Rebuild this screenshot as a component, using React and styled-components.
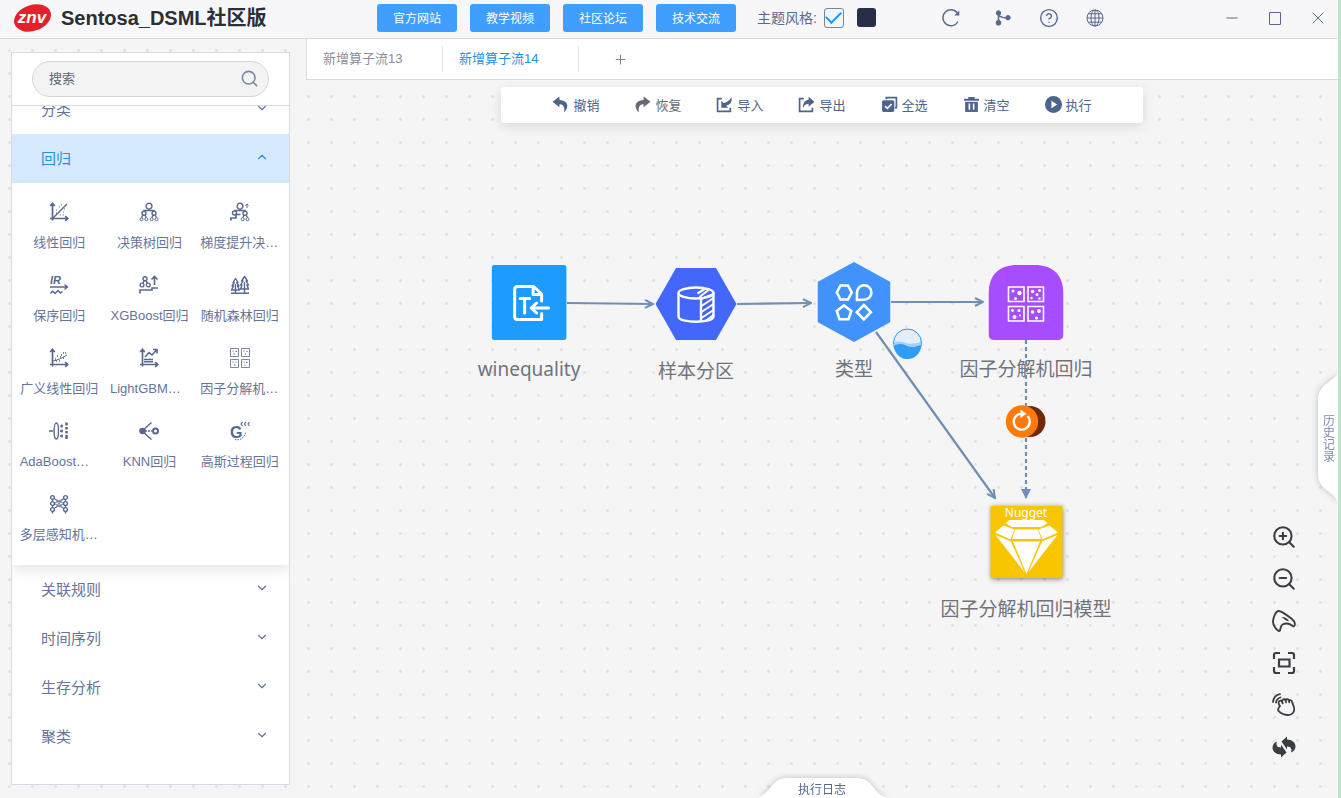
import { useLayoutEffect, useRef } from "react";
import styled, { createGlobalStyle } from "styled-components";
import { ChevronDown, ChevronUp, CircleHelp, Minus, Plus, Search, X, ZoomIn, ZoomOut } from "lucide-react";

const links = ["官方网站", "教学视频", "社区论坛", "技术交流"];
const tabs = ["新增算子流13", "新增算子流14"];

const algorithms = [
  { name: "线性回归", icon: <LinearIcon /> },
  { name: "决策树回归", icon: <TreeIcon /> },
  { name: "梯度提升决策树回归", icon: <BoostTreeIcon /> },
  { name: "保序回归", icon: <IsotonicIcon /> },
  { name: "XGBoost回归", icon: <XgbIcon /> },
  { name: "随机森林回归", icon: <ForestIcon /> },
  { name: "广义线性回归", icon: <GlmIcon /> },
  { name: "LightGBM回归", icon: <LightGbmIcon /> },
  { name: "因子分解机回归", icon: <FactorIcon /> },
  { name: "AdaBoost回归", icon: <AdaBoostIcon /> },
  { name: "KNN回归", icon: <KnnIcon /> },
  { name: "高斯过程回归", icon: <GaussIcon /> },
  { name: "多层感知机回归", icon: <MlpIcon /> },
];

const actions = [
  { name: "撤销", icon: <UndoIcon /> },
  { name: "恢复", icon: <RedoIcon />, muted: true },
  { name: "导入", icon: <ImportIcon /> },
  { name: "导出", icon: <ExportIcon /> },
  { name: "全选", icon: <SelectAllIcon /> },
  { name: "清空", icon: <TrashIcon /> },
  { name: "执行", icon: <RunIcon /> },
];

// x and y are the centre of the shape on the canvas
const nodes = [
  { name: "winequality", x: 223, y: 222, shape: <SourceShape /> },
  { name: "样本分区", x: 390, y: 224, shape: <PartitionShape /> },
  { name: "类型", x: 548, y: 222, shape: <TypeShape /> },
  { name: "因子分解机回归", x: 720, y: 222, shape: <FactorShape /> },
  { name: "因子分解机回归模型", x: 720, y: 462, shape: <NuggetShape /> },
];

function App() {
  return (
    <Page>
      <GlobalStyle />
      <Header />
      <Body>
        <Sidebar />
        <Workspace>
          <TabBar>
            {tabs.map((tab, i) => (
              <Tab key={tab} $active={i === 1}>{tab}</Tab>
            ))}
            <AddTab aria-label="新增"><Plus size={15} strokeWidth={1.7} /></AddTab>
          </TabBar>
          <Canvas>
            <Toolbar>
              {actions.map((a) => (
                <Action key={a.name} $muted={a.muted}>{a.icon}{a.name}</Action>
              ))}
            </Toolbar>
            {nodes.map((n) => (
              <Node key={n.name} $x={n.x} $y={n.y}>
                <Shape>{n.shape}</Shape>
                <NodeLabel>{n.name}</NodeLabel>
              </Node>
            ))}
            <Edges />
            <CanvasTools />
            <HistoryTab><HistoryButton>历史记录</HistoryButton></HistoryTab>
            <LogTab><LogButton>执行日志</LogButton></LogTab>
          </Canvas>
        </Workspace>
      </Body>
    </Page>
  );
}

function Header() {
  return (
    <HeaderBar>
      <Brand>
        <svg width="39" height="30" viewBox="0 0 39 30">
          <ellipse cx="19.5" cy="15" rx="19" ry="13" fill="#e5202b" transform="rotate(-18 19.5 15)" />
          <LogoText x="19" y="20" textAnchor="middle">znv</LogoText>
        </svg>
        <Title>Sentosa_DSML社区版</Title>
      </Brand>
      <LinkList>
        {links.map((l) => <LinkButton key={l}>{l}</LinkButton>)}
      </LinkList>
      <Theme>
        <ThemeLabel htmlFor="light">主题风格:</ThemeLabel>
        <Check id="light" type="checkbox" defaultChecked />
        <Swatch aria-label="深色" />
      </Theme>
      <Refresh>
        <IconButton aria-label="刷新">
          <svg width="20" height="20" viewBox="0 0 20 20" fill="none" stroke="currentColor" strokeWidth="1.4">
            <path d="M17 13.5A8 8 0 1 1 16.5 5.2" />
            <path d="M18.3 2.5v5h-5z" fill="currentColor" stroke="none" />
          </svg>
        </IconButton>
      </Refresh>
      <IconList>
        <IconButton aria-label="分支">
          <svg width="20" height="20" viewBox="0 0 20 20" fill="currentColor" stroke="currentColor">
            <path d="M5.5 5v10M5.5 6.5C7 9.5 11 10 15 9.7" fill="none" strokeWidth="1.6" />
            <circle cx="5.5" cy="5" r="2.2" />
            <circle cx="5.5" cy="14.8" r="2.4" />
            <circle cx="15" cy="9.7" r="2.2" />
          </svg>
        </IconButton>
        <IconButton aria-label="帮助"><CircleHelp size={20} strokeWidth={1.7} /></IconButton>
        <IconButton aria-label="语言">
          <svg width="20" height="20" viewBox="0 0 20 20" fill="none" stroke="currentColor">
            <circle cx="10" cy="10" r="8" />
            <ellipse cx="10" cy="10" rx="4" ry="8" />
            <path d="M10 2v16M2 10h16M3.3 5.8h13.4M3.3 14.2h13.4" />
          </svg>
        </IconButton>
      </IconList>
      <WindowList>
        <IconButton aria-label="最小化"><Minus size={18} strokeWidth={1.4} /></IconButton>
        <IconButton aria-label="最大化">
          <svg width="18" height="18" viewBox="0 0 18 18" fill="none" stroke="currentColor">
            <path d="M3.5 3.5h11v12h-11z" />
          </svg>
        </IconButton>
        <IconButton aria-label="关闭"><X size={20} strokeWidth={1.2} /></IconButton>
      </WindowList>
    </HeaderBar>
  );
}

function Sidebar() {
  const list = useRef(null);
  useLayoutEffect(() => {
    list.current.scrollTop = 21;
  }, []);

  return (
    <Aside>
      <SearchArea>
        <SearchBox>
          <SearchInput aria-label="搜索" placeholder="搜索" />
          <Search size={19} strokeWidth={2} />
        </SearchBox>
      </SearchArea>
      <List ref={list}>
        <Group>分类<ChevronDown size={14} strokeWidth={2} /></Group>
        <Group $open>回归<ChevronUp size={14} strokeWidth={2} /></Group>
        <Grid>
          {algorithms.map((a) => (
            <Cell key={a.name} title={a.name}>
              {a.icon}
              <CellName>{a.name}</CellName>
            </Cell>
          ))}
        </Grid>
        {["关联规则", "时间序列", "生存分析", "聚类"].map((g) => (
          <Group key={g}>{g}<ChevronDown size={14} strokeWidth={2} /></Group>
        ))}
      </List>
    </Aside>
  );
}

function Edges() {
  return (
    <EdgeLayer>
      <defs>
        <marker id="open" viewBox="0 0 10 10" refX="9" refY="5" markerWidth="10" markerHeight="10" markerUnits="userSpaceOnUse" orient="auto">
          <path d="M1 1l8 4-8 4" fill="none" stroke="#6f8fb5" strokeWidth="2" />
        </marker>
        <marker id="solid" viewBox="0 0 10 10" refX="9" refY="5" markerWidth="10" markerHeight="10" markerUnits="userSpaceOnUse" orient="auto">
          <path d="M0 0l10 5-10 5z" fill="#6f8fb5" />
        </marker>
      </defs>
      <g stroke="#6f8fb5" strokeWidth="2.2" fill="none">
        <path d="M261 223l86 1" markerEnd="url(#open)" />
        <path d="M431 224l74-1" markerEnd="url(#open)" />
        <path d="M585 222h92" markerEnd="url(#open)" />
        <path d="M570 252l119 166" markerEnd="url(#open)" />
        <path d="M720 260v158" strokeDasharray="4 3" markerEnd="url(#solid)" />
      </g>
      <g>
        <circle cx="601.5" cy="263" r="14" fill="#e3eef8" stroke="#2196f3" />
        <path d="M588 263c4-3 8-1 12 0s9 1 15-1v3l-3 4h-22z" fill="#a3cff5" />
        <path d="M588 266c5-3 9-2 13 0s9 1 14-1a13.5 13.5 0 0 1-27 1z" fill="#2f9df7" />
      </g>
      <g>
        <circle cx="724" cy="341.5" r="15.5" fill="#6e2a0b" />
        <circle cx="716" cy="341.5" r="16.2" fill="#ff7a08" />
        <path d="M721.5 336a8 8 0 1 1-6-2.4" fill="none" stroke="#fff" strokeWidth="2.4" />
        <path d="M714.5 329.5l6 4.2-6 4.2z" fill="#fff" />
      </g>
    </EdgeLayer>
  );
}

function CanvasTools() {
  return (
    <ToolList>
      <ToolButton aria-label="放大"><ZoomIn size={26} strokeWidth={1.9} /></ToolButton>
      <ToolButton aria-label="缩小"><ZoomOut size={26} strokeWidth={1.9} /></ToolButton>
      <ToolButton aria-label="画笔">
        <svg width="24" height="24" viewBox="0 0 24 24" fill="none" stroke="currentColor" strokeWidth="1.9" strokeLinejoin="round">
          <path d="M6.5 2C4 2 1.2 8 1 12.500c-.2 4 3.800 9 6 9.500 2.200.2.500-5 3.500-6.500 3-1.500 7-1 9.500 1 1.500 1.500 2.200.8 2.700-.500.800-2.500-.7-4.300-2.700-6C15.500 6.500 9 1.500 6.500 2z" />
          <path d="M9.500 8l4.500 3.500 3 .7c-1-2.500-3.500-4.200-7.500-4.200z" fill="currentColor" stroke="none" />
        </svg>
      </ToolButton>
      <ToolButton aria-label="适应画布">
        <svg width="24" height="24" viewBox="0 0 24 24" fill="none" stroke="currentColor" strokeWidth="2.2">
          <path d="M2 8V4q0-2 2-2h4M16 2h4q2 0 2 2v4M22 16v4q0 2-2 2h-4M8 22H4q-2 0-2-2v-4M7 8.500h10.500v7H7z" />
        </svg>
      </ToolButton>
      <ToolButton aria-label="拖动">
        <svg width="24" height="24" viewBox="0 0 24 24" fill="none" stroke="currentColor" strokeWidth="1.8" strokeLinecap="round" strokeLinejoin="round">
          <path d="M1 9C1.500 4.500 4 2 8 1.200M4 9.500C4.500 6.700 6.500 5 8.500 4.500" />
          <path d="M8 13c-1.500-1.800-2-4-.5-5 .8-.6 2-.4 2.500.4C10 6.500 12.500 5.600 13.500 7c.8-1.200 3-1 3.500.5 1-.8 2.700-.2 3 1.200.8 2.800 2.700 5.300 2.200 8.300-.6 3.300-3.400 5.400-6.700 5-3.500-.4-6.500-1.500-9-4.200-1.500-1.800.5-3.300 1.500-4.800z" />
          <path d="M10 8.400l.7 2M13.500 7l.5 2.300M17 7.500l.3 1.800" />
        </svg>
      </ToolButton>
      <ToolButton aria-label="刷新画布">
        <svg width="24" height="24" viewBox="0 0 24 24" fill="currentColor">
          <path id="turn" d="M9.500 6.500L15 1.500v3c5 0 8.500 3 8.500 7 0 2.500-1.500 5-4.500 6 1.200-3 .2-6-4-6v3z" />
          <use href="#turn" transform="rotate(180 12 12)" />
        </svg>
      </ToolButton>
    </ToolList>
  );
}

/* algorithm icons */

function AlgoSvg({ children }) {
  return (
    <svg width="20" height="20" viewBox="0 0 20 20" fill="none" stroke="currentColor" strokeWidth="1.4">
      {children}
    </svg>
  );
}

function Axes() {
  return <path strokeWidth="1.7" d="M3.5 1.5v17M1 16.5h17.5M1.2 4l2.300-2.600L5.800 4M16.200 14.200l2.500 2.300-2.500 2.300" />;
}

function LinearIcon() {
  return (
    <AlgoSvg>
      <Axes />
      <path d="M4 16L18 2" strokeWidth="1.5" />
      <path d="M7 8h1M10 5h1M7 11h1M12 3h1M11 13h1M14 10h1M15 7h1M14 13h1" strokeWidth="1" />
    </AlgoSvg>
  );
}

function TreeIcon() {
  return (
    <AlgoSvg>
      <circle cx="10" cy="4.2" r="2.9" />
      <circle cx="5" cy="11.3" r="2" />
      <circle cx="15" cy="11.3" r="2" />
      <path d="M10 7v1.500M5 9.300V8.500h10v.8M4 13l-1.500 2.500M6 13l1 2.500M14 13l-1 2.500M16 13l1.500 2.500" />
      <g strokeWidth="1">
        <circle cx="2.5" cy="17.2" r="1.5" />
        <circle cx="7.3" cy="17.2" r="1.5" />
        <circle cx="12.7" cy="17.2" r="1.5" />
        <circle cx="17.5" cy="17.2" r="1.5" />
      </g>
    </AlgoSvg>
  );
}

function BoostTreeIcon() {
  return (
    <AlgoSvg>
      <circle cx="10" cy="4.2" r="2.9" />
      <circle cx="4.5" cy="11" r="2" />
      <circle cx="15" cy="11.3" r="2" />
      <path d="M10 7v1.500M5 9V8.500h10v.8M14 13l-1 2.500M16 13l1.500 2.500" />
      <path d="M1 18.500V16h5v-3.500h4.500" strokeWidth="1.7" />
      <path d="M17 6V2M15.500 3.500L17 2l1.500 1.500" strokeWidth="1" />
      <circle cx="12.7" cy="17.2" r="1.5" strokeWidth="1" />
      <circle cx="17.5" cy="17.2" r="1.5" strokeWidth="1" />
    </AlgoSvg>
  );
}

function IsotonicIcon() {
  return (
    <AlgoSvg>
      <path d="M1 12h17M15.500 9.500l3 2.500-3 2.500M1.500 18.500l2-2.500 2.500 2.500L9 15.500l2.500 2.500 2-1.500" />
      <GlyphText x="1" y="9">IR</GlyphText>
    </AlgoSvg>
  );
}

function XgbIcon() {
  return (
    <AlgoSvg>
      <circle cx="6" cy="3.8" r="2" />
      <circle cx="3" cy="10" r="1.9" />
      <circle cx="9.3" cy="10" r="1.9" />
      <path d="M5.300 6L3.800 8M7 6l1.500 2" />
      <path d="M15.500 10V2M12.500 4.500l3-3 3 3M1 18.500V15h12v-2h6" strokeWidth="1.6" />
    </AlgoSvg>
  );
}

function ForestIcon() {
  return (
    <AlgoSvg>
      <path d="M1 18.300h18M5.500 9v9M14.500 7v11M5.500 3.500L3 7.500h1.300L2 11h1.500L1.500 15h8L7.500 11H9L6.700 7.500H8zM14.500 1.500l-3 4.500h1.500l-2.500 4H12l-1.500 4h8L17 10h1.500L16 6h1.500z" strokeLinejoin="round" />
    </AlgoSvg>
  );
}

function GlmIcon() {
  return (
    <AlgoSvg>
      <Axes />
      <path d="M4 13c4-.5 8-2.500 14-6" strokeWidth="1" />
      <path d="M6 11h1M8 8h1M11 9h1M10 13h1M14 5h1M16 5h1M14 10h1M12 7h1M7 13h1" />
    </AlgoSvg>
  );
}

function LightGbmIcon() {
  return (
    <AlgoSvg>
      <Axes />
      <path d="M6 9l4-4.500 3 2.500 5-5.500M14 1.500h4v4" strokeWidth="1.6" />
      <path d="M5 11.500h9M5 13.800h9" />
    </AlgoSvg>
  );
}

function FactorIcon() {
  return (
    <AlgoSvg>
      <path d="M.5.5h8v8h-8zM11.500.5h8v8h-8zM.5 11.500h8v8h-8zM11.500 11.500h8v8h-8z" strokeWidth=".8" />
      <path d="M2.500 3h1M5.500 3.500h1.500M3.500 6h1.500M13.500 3h1M16.500 3.500h1M15 6h1M2.500 14h1M5.500 14h1M4 17h1.500M13.500 14h1M16 14.500h1.500M14.500 17h1" strokeWidth="1.2" />
    </AlgoSvg>
  );
}

function AdaBoostIcon() {
  return (
    <AlgoSvg>
      <ellipse cx="7.3" cy="10" rx="2.2" ry="8" />
      <path d="M0 10h4M11 5h3M11 10h3M11 15h3M12.800 3.500v3M12.800 8.500v3M12.800 13.500v3" />
      <path d="M17.500 1.500v3M17.500 6v2.500M17.500 10v2.500M17.500 14v4" strokeWidth="2.500" />
    </AlgoSvg>
  );
}

function KnnIcon() {
  return (
    <AlgoSvg>
      <circle cx="3.5" cy="10" r="2.6" fill="currentColor" />
      <circle cx="16.5" cy="10" r="2.5" strokeWidth="2" />
      <path d="M3 10l9.500-8.500M3 10l9.500 8.500" strokeWidth="1.5" />
      <path d="M6 10h7" strokeDasharray="2 1" />
    </AlgoSvg>
  );
}

function GaussIcon() {
  return (
    <AlgoSvg>
      <GlyphText x="0" y="17" $big>G</GlyphText>
      <path d="M12.500 1l-1.500 2 1.500 2M16 1l-1.500 2L16 5M19.500 1L18 3l1.500 2" strokeWidth="1.2" />
      <path d="M5 18.500c5 1 9-1 10.500-7" strokeWidth="1" strokeDasharray="1.5 1" />
    </AlgoSvg>
  );
}

function MlpIcon() {
  return (
    <AlgoSvg>
      {[3.5, 9.5, 15.5].map((y) => (
        <g key={y}>
          <circle cx="3.5" cy={y} r="1.9" />
          <circle cx="16.5" cy={y} r="1.9" />
        </g>
      ))}
      <path d="M5 4l10 11M5 15L15 4M5 9.500l10-5M5 9.500l10 5M5 4.500l10 5M5 14.500l10-5" strokeWidth=".9" />
      <path d="M3.500 5.500v2M3.500 11.500v2M16.500 5.500v2M16.500 11.500v2M3.500 17.500v2M16.500 17.500v2" />
    </AlgoSvg>
  );
}

/* toolbar icons */

function ActionSvg({ children }) {
  return <svg width="17" height="17" viewBox="0 0 16 16" fill="currentColor">{children}</svg>;
}

function UndoIcon() {
  return <ActionSvg><path d="M7 .5L.500 5.500l6.500 5V7.700c3.500 0 5 2 4.500 7.500 4.500-4 4.500-11-4.500-11.500z" /></ActionSvg>;
}

function RedoIcon() {
  return <ActionSvg><path d="M9 .5l6.500 5-6.500 5V7.700c-3.500 0-5 2-4.500 7.500C0 11.200 0 4.200 9 3.700z" /></ActionSvg>;
}

function ImportIcon() {
  return (
    <ActionSvg>
      <path d="M5.500 2.500h-4v12h12V11" fill="none" stroke="currentColor" strokeWidth="1.6" />
      <path d="M5 11V4.500l2.200 2.200C9.500 6.500 12 5 14.500 1.500 15.500 6 13 8.700 9.500 9l2 2z" />
    </ActionSvg>
  );
}

function ExportIcon() {
  return (
    <ActionSvg>
      <path d="M5.500 2.500h-4v12h12V11" fill="none" stroke="currentColor" strokeWidth="1.6" />
      <path d="M10 .8l5.500 4.700-5.500 4.500V7.300C7.500 7.300 6 8.500 4.800 11.200 4.500 6.500 6.500 3.800 10 3.500z" />
    </ActionSvg>
  );
}

function SelectAllIcon() {
  return (
    <ActionSvg>
      <path d="M5 3V1.500h9.500V11H13" fill="none" stroke="currentColor" strokeWidth="1.6" />
      <path d="M2.500 4h8.500q1.500 0 1.500 1.500v8q0 1.500-1.500 1.500H2.500Q1 15 1 13.500v-8Q1 4 2.500 4z" />
      <path d="M3.800 9.500l2.200 2.200 4-4.200" fill="none" stroke="#fff" strokeWidth="1.5" />
    </ActionSvg>
  );
}

function TrashIcon() {
  return (
    <ActionSvg>
      <path d="M1 2.500h4V1h6v1.500h4v2H1z" />
      <path d="M2 5.500h12V15H2z" />
      <path d="M6 7v6M10 7v6" stroke="#fff" strokeWidth="1.5" />
    </ActionSvg>
  );
}

function RunIcon() {
  return (
    <ActionSvg>
      <circle cx="8" cy="8" r="8" />
      <path d="M6 4.500L11.500 8 6 11.500z" fill="#fff" />
    </ActionSvg>
  );
}

/* node shapes */

function SourceShape() {
  return (
    <svg width="75" height="75" viewBox="0 0 75 75" fill="none" stroke="#fff" strokeWidth="3" strokeLinecap="round" strokeLinejoin="round">
      <rect width="75" height="75" rx="3" fill="#1e9bff" stroke="none" />
      <path d="M50 36V29l-8-7.500H26q-3 0-3 3v27q0 3 3 3h24v-6M41.500 22v7.500H50" />
      <path d="M28.500 33.500h9.500M33 33.500V48M40 43h17M45 38l-5.500 5 5.500 5" />
    </svg>
  );
}

function PartitionShape() {
  return (
    <svg width="81" height="72" viewBox="0 0 81 72" fill="none" stroke="#fff" strokeWidth="2.4" strokeLinejoin="round">
      <path d="M0 36L20.500 0h40L81 36 60.500 72h-40z" fill="#4366fb" stroke="none" />
      <ellipse cx="40.5" cy="25" rx="17.5" ry="5.5" />
      <path d="M23 25v23.500c0 7 35 7 35 0V25M45.500 31v22.500M45.500 31L58 26M42 25.500l8-5" />
      <path d="M46 38l12-8M46 44l12-8M46 50l12-8M50 53l8-6M44 29l9-7" strokeWidth="2" />
    </svg>
  );
}

function TypeShape() {
  return (
    <svg width="73" height="80" viewBox="0 0 73 80" fill="none" stroke="#fff" strokeWidth="2.6">
      <path d="M36.500 0L73 20v40L36.500 80 0 60V20z" fill="#4192fd" stroke="none" />
      <path d="M23 23.500h7.500l3.700 7-3.700 7H23l-3.700-7z" />
      <path d="M39.500 38v-7.500a7.200 7.200 0 1 1 7.200 7.200z" />
      <path d="M26.500 43.500l7.300 5.500-2.800 8.300h-9L19.300 49z" />
      <path d="M46.300 43l7 7.200-7 7.200-7-7.200z" />
    </svg>
  );
}

function FactorShape() {
  return (
    <svg width="75" height="75" viewBox="0 0 75 75" fill="none" stroke="#fff" strokeWidth="1.6">
      <path d="M0 30C0 9 11 0 29 0h17c18 0 29 9 29 30v39q0 6-6 6H6q-6 0-6-6z" fill="#a64dff" stroke="none" />
      <path d="M20 22h15.500v14.500H20zM39.500 22H55v14.500H39.500zM20 41.500h15.500V56H20zM39.500 41.500H55V56H39.500z" />
      <g fill="#fff" stroke="none">
        <circle cx="24.5" cy="26" r="1.5" /><circle cx="31" cy="28" r="2.2" /><circle cx="27" cy="33.5" r="1.5" />
        <circle cx="44" cy="26.5" r="1.8" /><circle cx="51" cy="25.5" r="1.4" /><circle cx="48.5" cy="29.5" r="1.5" />
        <circle cx="43" cy="33" r="1.2" /><circle cx="51" cy="33.5" r="1.2" />
        <circle cx="24" cy="45.5" r="1.4" /><circle cx="30.5" cy="45.5" r="1.6" /><circle cx="26" cy="52" r="2" />
        <circle cx="31.5" cy="50.5" r="1" />
        <circle cx="44" cy="47" r="1.8" /><circle cx="50.5" cy="46" r="1.9" /><circle cx="48" cy="53" r="1.6" />
      </g>
    </svg>
  );
}

function NuggetShape() {
  return (
    <Nugget>
      <NuggetName>Nugget</NuggetName>
      <svg width="64" height="55" viewBox="4 15 64 55" fill="#fff">
        <path d="M15 18l4-3h34l4 3-6 4H21z" />
        <path d="M4.500 27.500L13 20.500l11 4-4 10z" />
        <path d="M67.500 27.500L59 20.500l-11 4 4 10z" />
        <path d="M24.500 24.500h23l3 9.500h-29z" />
        <path d="M5 30l15.500 6.500L34 67z" />
        <path d="M67 30l-15.500 6.500L38 67z" />
        <path d="M22.500 36.500h27L36 69z" />
      </svg>
    </Nugget>
  );
}

const GlobalStyle = createGlobalStyle`
  * { box-sizing: border-box; }
  body {
    margin: 0;
    overflow: hidden;
    font-family: "Liberation Sans", "Noto Sans CJK SC", sans-serif;
    color: #586891;
  }
  button, input {
    font: inherit;
    color: inherit;
  }
  button {
    padding: 0;
    border: 0;
    background: none;
    cursor: pointer;
  }
`;
const Page = styled.div`
  display: flex;
  flex-direction: column;
  height: 100vh;
  border-right: 3px solid #b9e8c9;
`;
const HeaderBar = styled.header`
  display: flex;
  align-items: center;
  height: 39px;
  padding: 0 10px 3px 13px;
  background: #f7f7fa;
  border-bottom: 1px solid #d8dade;
`;
const Brand = styled.div`
  display: flex;
  align-items: center;
  gap: 9px;
  width: 364px;
`;
const LogoText = styled.text`
  font-size: 17px;
  font-weight: bold;
  font-style: italic;
  fill: #fff;
`;
const Title = styled.h1`
  margin: 0;
  font-size: 20px;
  line-height: 28px;
  color: #2b2f36;
`;
const LinkList = styled.nav`
  display: flex;
  gap: 13px;
`;
const LinkButton = styled.button`
  width: 80px;
  height: 28px;
  border-radius: 3px;
  background: #409eff;
  color: #fff;
  font-size: 12px;
`;
const Theme = styled.div`
  display: flex;
  align-items: center;
  margin-left: 21px;
`;
const ThemeLabel = styled.label`
  margin-right: 7px;
  font-size: 14px;
  line-height: 20px;
`;
const Check = styled.input`
  appearance: none;
  display: grid;
  place-items: center;
  width: 20px;
  height: 20px;
  margin: 0 13px 0 0;
  border: 1px solid #7d8494;
  border-radius: 3px;
  background: #eef6ff;

  &:checked::after {
    content: "";
    width: 13px;
    height: 7px;
    margin-bottom: 4px;
    border: solid #1e9bff;
    border-width: 0 0 2px 2px;
    transform: rotate(-45deg);
  }
`;
const Swatch = styled.button`
  width: 19px;
  height: 19px;
  border-radius: 3px;
  background: #262f45;
`;
const Refresh = styled.div`
  margin-left: 65px;
`;
const IconList = styled.div`
  display: flex;
  gap: 26px;
  margin-left: 32px;
`;
const WindowList = styled.div`
  display: flex;
  gap: 23px;
  margin-left: auto;
`;
const IconButton = styled.button`
  display: grid;
  place-items: center;
  width: 20px;
  height: 20px;
`;
const Body = styled.div`
  flex: 1;
  display: flex;
  min-height: 0;
  background: #f5f5f5 radial-gradient(circle, #e2e2e3 1px, transparent 2px) -2px 0 / 23px 23px;
`;
const Aside = styled.aside`
  display: flex;
  flex-direction: column;
  width: 279px;
  margin: 13px 16px 13px 11px;
  border: 1px solid #d8dce2;
  background: #fff;
`;
const SearchArea = styled.div`
  padding: 8px 20px;
  border-bottom: 1px solid #d8dade;
`;
const SearchBox = styled.div`
  display: flex;
  align-items: center;
  height: 36px;
  padding: 0 9px 2px 16px;
  border: 1px solid #d4d6da;
  border-radius: 18px;
  background: #f3f3f3;
  color: #7885a8;
`;
const SearchInput = styled.input`
  flex: 1;
  min-width: 0;
  padding: 0;
  border: 0;
  outline: 0;
  background: none;
  font-size: 13px;

  &::placeholder {
    color: #5d6579;
    opacity: 1;
  }
`;
const List = styled.div`
  flex: 1;
  min-height: 0;
  padding-bottom: 25px;
  overflow: auto;
  scrollbar-width: none;
`;
const Group = styled.button`
  display: flex;
  align-items: center;
  justify-content: space-between;
  width: 100%;
  height: 49px;
  padding: 0 20px 3px 29px;
  background: ${({ $open }) => ($open ? "#d5eafe" : "none")};
  color: ${({ $open }) => ($open ? "#2a8fe0" : "#66749a")};
  font-size: 15px;
`;
const Grid = styled.div`
  display: grid;
  grid-template-columns: repeat(3, 1fr);
  padding: 0 4px 17px 2px;
  box-shadow: 0 5px 12px rgba(0, 0, 0, 0.1);
`;
const Cell = styled.button`
  display: flex;
  flex-direction: column;
  align-items: center;
  gap: 11px;
  height: 73px;
  padding-top: 19px;
`;
const CellName = styled.span`
  width: 79px;
  overflow: hidden;
  color: #66749a;
  font-size: 13px;
  line-height: 19px;
  white-space: nowrap;
  text-overflow: ellipsis;
`;
const GlyphText = styled.text`
  font-size: ${({ $big }) => ($big ? "16px" : "11px")};
  font-weight: bold;
  font-style: ${({ $big }) => ($big ? "normal" : "italic")};
  fill: currentColor;
  stroke: none;
`;
const Workspace = styled.main`
  flex: 1;
  display: flex;
  flex-direction: column;
  min-width: 0;
`;
const TabBar = styled.div`
  display: flex;
  align-items: center;
  height: 41px;
  border-left: 1px solid #d8dade;
  border-bottom: 1px solid #d8dade;
  background: #fff;
`;
const Tab = styled.button`
  width: 136px;
  height: 26px;
  padding: 0 0 4px 16px;
  border-right: 1px solid #e3e5e9;
  color: ${({ $active }) => ($active ? "#1f8fe6" : "#8b8f98")};
  font-size: 13px;
  text-align: left;
`;
const AddTab = styled.button`
  display: grid;
  place-items: center;
  width: 82px;
  color: #7d8494;
`;
const Canvas = styled.div`
  position: relative;
  flex: 1;
  overflow: hidden;
`;
const Toolbar = styled.div`
  display: flex;
  justify-content: center;
  gap: 35px;
  width: fit-content;
  height: 36px;
  margin: 7px auto 0;
  padding: 0 51px 2px;
  border-radius: 3px;
  background: #fff;
  box-shadow: 0 3px 12px rgba(0, 0, 0, 0.12);
`;
const Action = styled.button`
  display: flex;
  align-items: center;
  gap: 4px;
  color: ${({ $muted }) => ($muted ? "#666a75" : "#4f638f")};
  font-size: 13px;
`;
const Node = styled.div`
  position: absolute;
  left: ${({ $x }) => $x}px;
  top: ${({ $y }) => $y - 41}px;
  display: flex;
  flex-direction: column;
  align-items: center;
  gap: 13px;
  transform: translateX(-50%);
`;
const Shape = styled.div`
  display: grid;
  place-items: center;
  height: 82px;
`;
const NodeLabel = styled.span`
  font-family: "Noto Sans", "Noto Sans CJK SC", sans-serif;
  font-size: 19px;
  line-height: 26px;
  color: #70737c;
  white-space: nowrap;
`;
const Nugget = styled.div`
  display: flex;
  flex-direction: column;
  align-items: center;
  width: 72px;
  height: 72px;
  background: #f7c600;
  box-shadow: 1px 1px 5px rgba(0, 0, 0, 0.5);
`;
const NuggetName = styled.span`
  font-family: "Noto Sans", sans-serif;
  font-size: 12px;
  line-height: 14px;
  color: #fff;
`;
const EdgeLayer = styled.svg`
  position: absolute;
  inset: 0;
  width: 100%;
  height: 100%;
  pointer-events: none;
`;
const ToolList = styled.div`
  position: absolute;
  right: 41px;
  bottom: 38px;
  display: flex;
  flex-direction: column;
  gap: 16px;
`;
const ToolButton = styled.button`
  display: grid;
  place-items: center;
  width: 26px;
  height: 26px;
  color: #3b3d42;
`;
const HistoryTab = styled.div`
  position: absolute;
  right: 0;
  top: 293px;
  filter: drop-shadow(0 0 3px rgba(60, 70, 110, 0.3));
`;
const HistoryButton = styled.button`
  display: grid;
  place-items: center;
  width: 20px;
  height: 130px;
  background: #fff;
  clip-path: path("M20 0C16 9 0 10 0 28v72c0 18 16 17 20 30z");
  color: #7f8db2;
  font-size: 12px;
  writing-mode: vertical-rl;
`;
const LogTab = styled.div`
  position: absolute;
  left: 50%;
  bottom: 0;
  transform: translateX(-50%);
  filter: drop-shadow(0 0 3px rgba(60, 70, 110, 0.3));
`;
const LogButton = styled.button`
  width: 130px;
  height: 20px;
  background: #fff;
  clip-path: path("M0 20C14 16 14 0 30 0h70c16 0 16 16 30 20z");
  font-size: 12px;
`;

export default App;
